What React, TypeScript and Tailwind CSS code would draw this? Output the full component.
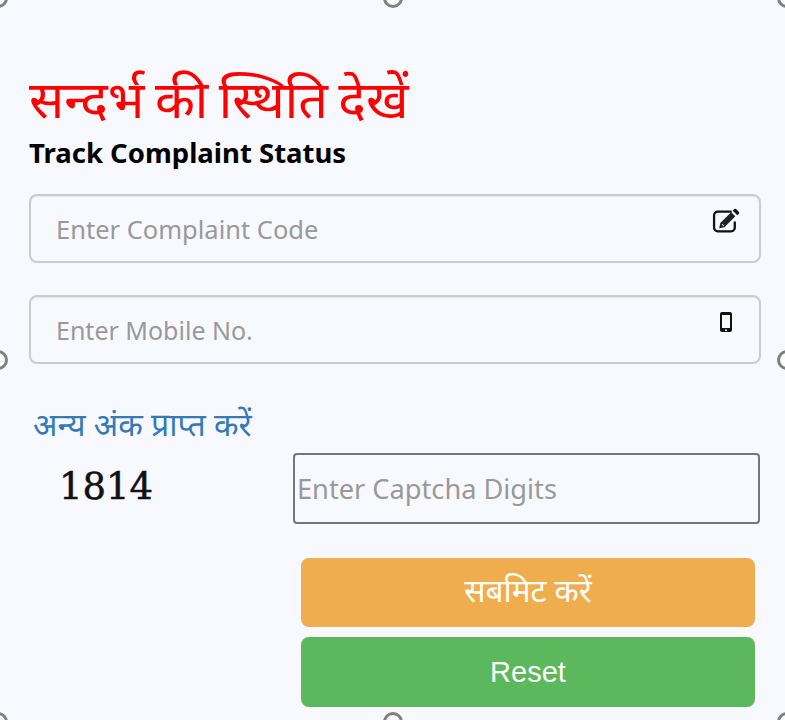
import { useState } from 'react';

function EditIcon() {
  return (
    <svg viewBox="0 0 28 24" className="w-[29px] h-[25px]" fill="none">
      <path d="M19 3.5H5.5A3.5 3.5 0 0 0 2 7v12a3.5 3.5 0 0 0 3.5 3.5h13A3.5 3.5 0 0 0 22 19v-6" stroke="#111" strokeWidth="2.2" />
      <path d="M8 14.5L18.5 4l4 4L12 18.5l-5 1z" fill="#222" />
      <path d="M20 2.5l1.5-1.5a1.2 1.2 0 0 1 1.7 0l2.8 2.8a1.2 1.2 0 0 1 0 1.7l-1.5 1.5z" fill="#111" />
      <path d="M9.5 15.5l2 2" stroke="#ccc" strokeWidth="1" />
    </svg>
  );
}

function PhoneIcon() {
  return (
    <svg viewBox="0 0 14 22" className="w-[14px] h-[22px]">
      <path fillRule="evenodd" d="M3 1h8a2 2 0 0 1 2 2v16a2 2 0 0 1-2 2H3a2 2 0 0 1-2-2V3a2 2 0 0 1 2-2zm0 3v13h8V4zm4 14.2a1 1 0 1 0 0 2 1 1 0 0 0 0-2z" fill="#111" />
    </svg>
  );
}

function Handle({ className }: { className: string }) {
  return <div className={`absolute w-[20px] h-[20px] rounded-full border-[3px] border-[#808080] bg-white ${className}`} />;
}

export default function App() {
  const [code, setCode] = useState('');
  const [mobile, setMobile] = useState('');
  const [captcha, setCaptcha] = useState('');

  return (
    <div className="relative w-[785px] h-[720px] overflow-hidden bg-[#f8f9ff] font-['Noto_Sans',sans-serif]">
      {/* Resize handles */}
      <Handle className="left-[-12px] top-[-12px]" />
      <Handle className="left-[383px] top-[-12px]" />
      <Handle className="right-[-12px] top-[-12px]" />
      <Handle className="left-[-12px] top-[350px]" />
      <Handle className="right-[-12px] top-[350px]" />
      <Handle className="left-[-12px] bottom-[-12px]" />
      <Handle className="left-[383px] bottom-[-12px]" />
      <Handle className="right-[-12px] bottom-[-12px]" />

      <div className="flex flex-col pt-[65px] pl-[29px] pr-[24px]">
        <h1 className="text-[52px] leading-[66px] text-[#ff0000] font-normal [word-spacing:-3px]">सन्दर्भ की स्थिति देखें</h1>
        <h2 className="text-[27.5px] leading-[36px] font-bold text-black mt-[4px]">Track Complaint Status</h2>

        <div className="relative mt-[23px]">
          <input
            value={code}
            onChange={(e) => setCode(e.target.value)}
            placeholder="Enter Complaint Code"
            className="w-full h-[69px] rounded-[8px] border-2 border-[#cccccc] bg-transparent px-[25px] text-[25.5px] outline-none shadow-[inset_0_1px_1px_rgba(0,0,0,0.075)] placeholder:text-[#999999]"
          />
          <div className="absolute right-[20px] top-[14px]"><EditIcon /></div>
        </div>

        <div className="relative mt-[32px]">
          <input
            value={mobile}
            onChange={(e) => setMobile(e.target.value)}
            placeholder="Enter Mobile No."
            className="w-full h-[69px] rounded-[8px] border-2 border-[#cccccc] bg-transparent px-[25px] text-[25px] outline-none shadow-[inset_0_1px_1px_rgba(0,0,0,0.075)] placeholder:text-[#999999]"
          />
          <div className="absolute right-[28px] top-[16px]"><PhoneIcon /></div>
        </div>

        <a href="#" className="mt-[38px] ml-[4px] text-[32px] leading-[44px] text-[#337ab7]">अन्य अंक प्राप्त करें</a>

        <div className="flex items-center mt-[7px]">
          <div className="w-[264px] pl-[30px] pb-[4px] font-['DejaVu_Serif',serif] text-[37px] leading-[62px] text-[#111] [-webkit-text-stroke:0.5px_#111]">1814</div>
          <input
            value={captcha}
            onChange={(e) => setCaptcha(e.target.value)}
            placeholder="Enter Captcha Digits"
            className="flex-1 h-[71px] mr-[1px] rounded-[4px] border-2 border-[#767676] bg-transparent px-[2px] text-[27.2px] outline-none placeholder:text-[#999999]"
          />
        </div>

        <div className="flex flex-col gap-[10px] mt-[34px] ml-[272px] mr-[6px]">
          <button className="h-[69px] pb-[6px] rounded-[8px] bg-[#f0ad4e] text-white text-[31.5px]">सबमिट करें</button>
          <button className="h-[70px] pt-[2px] rounded-[8px] bg-[#5cb85c] text-white text-[29px] font-['Liberation_Sans',sans-serif]">Reset</button>
        </div>
      </div>
    </div>
  );
}
